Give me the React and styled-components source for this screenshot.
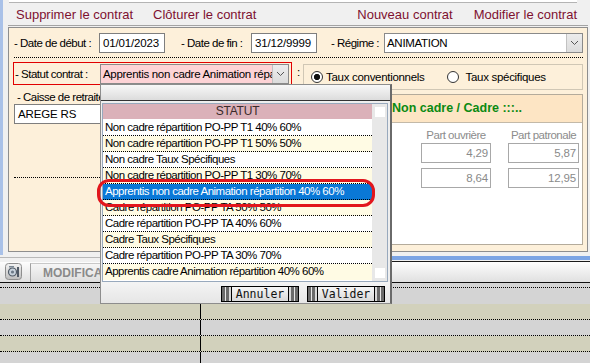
import React from 'react';
import styled, { createGlobalStyle } from 'styled-components';

const SANS = `"Liberation Sans", Arial, sans-serif`;
const MONO = `"DejaVu Sans Mono", "Liberation Mono", monospace`;

const GlobalStyle = createGlobalStyle`
  html, body { margin: 0; padding: 0; }
  body { width: 590px; height: 363px; overflow: hidden; background: #f0f0f0; }
  * { box-sizing: border-box; }
`;

const Root = styled.div`
  position: relative;
  width: 590px;
  height: 363px;
  overflow: hidden;
  background: #f0f0f0;
  display: flex;
  flex-direction: column;
  font-family: ${SANS};
  font-size: 11.5px;
  letter-spacing: -0.5px;
  color: #000;
`;

const Upper = styled.div`
  display: flex;
  height: 255px;
  flex-shrink: 0;
`;

const BlueStrip = styled.div`
  width: 3px;
  background: #a9c1e8;
`;

const UpperMain = styled.div`
  flex: 1;
  display: flex;
  flex-direction: column;
  padding: 0 2px 0 5px;
`;

const TopStrip = styled.div`
  height: 3px;
  background: #fff;
  border-bottom: 1px solid #b4b4b4;
  margin: 0 11px 0 1px;
`;

const Toolbar = styled.div`
  height: 23px;
  border-bottom: 1px solid #a3a3a3;
  display: flex;
  align-items: center;
  justify-content: space-between;
  padding: 0 11px 0 8px;
`;

const ToolGroup = styled.div`
  display: flex;
  gap: ${(p) => p.$gap}px;
`;

const ToolLink = styled.span`
  font-size: 13px;
  letter-spacing: 0;
  color: #7e1030;
  white-space: nowrap;
`;

const Panel = styled.div`
  margin-top: 1px;
  height: 225px;
  border: 1px solid #8e8e8e;
  background: #fdf0da;
  padding: 4px 3px 0 5px;
  display: flex;
  flex-direction: column;
`;

const FieldRow = styled.div`
  display: flex;
  align-items: center;
  height: 21px;
`;

const FieldLabel = styled.span`
  width: ${(p) => p.$w}px;
  margin-left: ${(p) => p.$ml || 0}px;
  white-space: nowrap;
  flex-shrink: 0;
`;

const TextBox = styled.div`
  width: ${(p) => p.$w}px;
  height: 20px;
  flex-shrink: 0;
  background: #fff;
  border: 1px solid #7e7e7e;
  font-size: 11.5px;
  letter-spacing: -0.15px;
  line-height: 18px;
  padding-left: 3px;
  white-space: nowrap;
  overflow: hidden;
`;

const SelectBox = styled.div`
  width: ${(p) => p.$w}px;
  height: 20px;
  flex-shrink: 0;
  display: flex;
  background: ${(p) => p.$bg || '#fff'};
  border: 1px solid #8a8a8a;
  font-size: 11.5px;
  letter-spacing: -0.3px;
  line-height: 18px;
`;

const SelectText = styled.span`
  flex: 1;
  padding-left: 2px;
  white-space: nowrap;
  overflow: hidden;
`;

const ArrowBtn = styled.span`
  width: 16px;
  background: linear-gradient(#ececec, #dcdcdc);
  border-left: 1px solid #c2c2c2;
  display: flex;
  align-items: center;
  justify-content: center;
`;

const DottedRule = styled.div`
  margin: ${(p) => p.$mt || 4}px 1px 0 0;
  width: ${(p) => (p.$w ? `${p.$w}px` : 'auto')};
  border-top: 1px dotted #000;
`;

const StatusRow = styled.div`
  display: flex;
  align-items: flex-start;
  margin-top: 4px;
  height: 28px;
`;

const RedBox = styled.div`
  margin-left: -1px;
  width: 279px;
  height: 23px;
  border: 1px solid #e10000;
  display: flex;
  align-items: center;
  padding-left: 1px;
`;

const ColonCell = styled.span`
  width: 11px;
  padding-left: 5px;
  line-height: 14px;
  margin-top: 3px;
`;

const RadioBox = styled.div`
  margin-top: 2px;
  width: 280px;
  height: 26px;
  border: 1px solid #d0c7b5;
  display: flex;
  align-items: center;
  padding-left: 7px;
`;

const RadioItem = styled.label`
  display: flex;
  align-items: center;
  gap: ${(p) => p.$gap}px;
  margin-left: ${(p) => p.$ml || 0}px;
  font-size: 11.5px;
  letter-spacing: -0.3px;
  white-space: nowrap;
`;

const RadioDot = styled.span`
  width: 12px;
  height: 12px;
  border-radius: 50%;
  border: 1px solid #333;
  background: ${(p) =>
    p.$checked ? 'radial-gradient(circle, #111 0 2.8px, #fff 3.4px)' : '#fff'};
`;

const LowerRow = styled.div`
  display: flex;
  margin-top: 1px;
`;

const LeftCol = styled.div`
  width: 288px;
  display: flex;
  flex-direction: column;
`;

const CaisseLabel = styled.span`
  line-height: 13px;
  padding-left: 3px;
`;

const RightCol = styled.div`
  margin-top: 3px;
  width: 281px;
  height: 151px;
  border: 1px solid #b4ab9b;
  display: flex;
  flex-direction: column;
`;

const RateHeader = styled.div`
  height: 28px;
  background: #fde5c4;
  border-bottom: 1px solid #c3b9a8;
  padding-left: 89px;
  font-weight: bold;
  font-size: 12.5px;
  letter-spacing: 0;
  line-height: 27px;
  color: #0b8a12;
  white-space: nowrap;
`;

const RateBody = styled.div`
  flex: 1;
  background: #fff;
  padding: 5px 3px 0 0;
  display: grid;
  grid-template-columns: 70px 71px;
  grid-auto-rows: min-content;
  column-gap: 17px;
  justify-content: end;
`;

const RateLabel = styled.span`
  height: 15px;
  line-height: 14px;
  text-align: center;
  color: #8c8c8c;
  white-space: nowrap;
`;

const RateValue = styled.div`
  height: 20px;
  margin-bottom: 5px;
  border: 1px solid #a8a8a8;
  text-align: right;
  padding-right: 2px;
  line-height: 18px;
  font-size: 11.5px;
  letter-spacing: -0.15px;
  color: #8a8a8a;
`;

const TabStrip = styled.div`
  height: 7px;
  display: flex;
  flex-shrink: 0;
`;

const TabStripLeft = styled.div`
  width: 200px;
  margin-top: 2px;
  height: 1px;
  background: #b8b8b8;
`;

const TabStripRight = styled.div`
  flex: 1;
  margin-top: 1px;
  border-top: 4px solid #7ba4e4;
  border-bottom: 1px solid #1a1a1a;
`;

const BottomToolbar = styled.div`
  height: 21px;
  flex-shrink: 0;
  background: linear-gradient(#fdfdfd, #e0e0e0);
  border-bottom: 1px solid #111;
  display: flex;
  align-items: flex-start;
  padding: 1px 0 0 5px;
`;

const IconBox = styled.span`
  width: 17px;
  height: 17px;
  display: flex;
`;

const ModeTab = styled.div`
  margin-left: 8px;
  height: 19px;
  width: 200px;
  border-left: 1px solid #a0a0a0;
  border-top: 1px solid #c8c8c8;
  background: linear-gradient(#f6f6f6, #dedede);
  padding-left: 12px;
  font-weight: bold;
  font-size: 12px;
  letter-spacing: 0;
  line-height: 18px;
  color: #8a8a8a;
`;

const Grid = styled.div`
  flex: 1;
  display: flex;
  flex-direction: column;
  background: #d4d4d4;
`;

const GridTop = styled.div`
  height: 5px;
  border-bottom: 1px dotted #000;
`;

const GridRow = styled.div`
  height: 16px;
  flex-shrink: 0;
  display: grid;
  grid-template-columns: 201px 1fr;
  background: ${(p) => (p.$alt ? '#d2d1bc' : '#d4d4d4')};
  border-bottom: ${(p) => (p.$line ? '1px dotted #000' : '1px solid transparent')};
`;

const GridCell = styled.div`
  border-right: ${(p) => (p.$first ? '1px solid #000' : 'none')};
`;

/* Popup list */
const Popup = styled.div`
  position: absolute;
  left: 100px;
  top: 84px;
  width: 292px;
  height: 220px;
  background: #eeeeee;
  border: 1px solid #8d8d8d;
  border-right: 2px solid #6a6a6a;
  display: flex;
  flex-direction: column;
`;

const PopHeader = styled.div`
  height: 16px;
  background: linear-gradient(#f8f8f8, #dcdcdc);
  border-bottom: 1px solid #333;
`;

const ListFrame = styled.div`
  margin: 2px 2px 0 1px;
  height: 179px;
  border: 1px solid #98a9bd;
  display: flex;
  background: #fff;
`;

const ListTable = styled.div`
  flex: 1;
  display: flex;
  flex-direction: column;
`;

const ListHead = styled.div`
  height: 15px;
  margin-bottom: 1px;
  background: #dbb1b9;
  text-align: center;
  line-height: 15px;
  font-size: 12px;
  letter-spacing: -0.2px;
  color: #3a2a2a;
`;

const ListRow = styled.div`
  height: 16px;
  line-height: 15px;
  padding-left: 2px;
  white-space: nowrap;
  overflow: hidden;
  border-bottom: 1px dotted #000;
  background: ${(p) => (p.$sel ? '#0a78d7' : p.$alt ? '#fffbe4' : '#fff')};
  color: ${(p) => (p.$sel ? '#fff' : '#000')};
  &:last-child { border-bottom: none; }
`;

const ScrollTrack = styled.div`
  width: 15px;
  background: #e8e8e8;
  display: flex;
  flex-direction: column;
  justify-content: space-between;
  align-items: center;
  padding: 3px 0 3px;
`;

const ScrollSquare = styled.span`
  width: 10px;
  height: 10px;
  background: #fff;
`;

const PopFooter = styled.div`
  flex: 1;
  display: flex;
  justify-content: flex-end;
  align-items: flex-end;
  gap: 8px;
  padding: 0 5px 1px 0;
  background: linear-gradient(#f4f4f4, #e6e6e6);
`;

const StripeButton = styled.div`
  width: 78px;
  height: 16px;
  border: 1px solid #000;
  display: flex;
`;

const ButtonCap = styled.span`
  width: 10px;
  background: linear-gradient(
    90deg,
    #6a6a6a 0 3px,
    #e6e6e6 3px 4px,
    #6a6a6a 4px 7px,
    #d8d8d8 7px 9px,
    #000 9px 10px
  );
  transform: ${(p) => (p.$right ? 'scaleX(-1)' : 'none')};
`;

const ButtonFace = styled.span`
  flex: 1;
  background: linear-gradient(#f6f6f6, #d9d9d9);
  font-family: ${MONO};
  font-size: 11.5px;
  letter-spacing: 0;
  line-height: 14px;
  text-align: center;
  color: #111;
`;

const Annotation = styled.div`
  position: absolute;
  left: 97px;
  top: 179px;
  width: 278px;
  height: 28px;
  border: 3px solid #e2161d;
  border-radius: 12px;
  pointer-events: none;
`;

const Chevron = () => (
  <svg width="9" height="6" viewBox="0 0 9 6">
    <path d="M1 1 L4.5 4.5 L8 1" fill="none" stroke="#555" strokeWidth="1" />
  </svg>
);

const CameraIcon = () => (
  <svg width="17" height="17" viewBox="0 0 17 17">
    <defs>
      <linearGradient id="camg" x1="0" y1="0" x2="0" y2="1">
        <stop offset="0" stopColor="#f4f4f4" />
        <stop offset="1" stopColor="#bdbdbd" />
      </linearGradient>
    </defs>
    <rect x="0.5" y="0.5" width="16" height="16" rx="3" fill="url(#camg)" stroke="#8e8e8e" />
    <circle cx="7.5" cy="9" r="4" fill="#c9d3dd" stroke="#505a66" strokeWidth="1.2" />
    <circle cx="7.5" cy="9" r="1.6" fill="#6d7a88" />
    <rect x="12" y="4" width="2" height="10" fill="#505a66" />
    <rect x="4" y="3" width="5" height="1.5" fill="#7a8794" />
  </svg>
);

const statuts = [
  'Non cadre répartition PO-PP T1 40% 60%',
  'Non cadre répartition PO-PP T1 50% 50%',
  'Non cadre Taux Spécifiques',
  'Non cadre répartition PO-PP T1 30% 70%',
  'Apprentis non cadre Animation répartition 40% 60%',
  'Cadre répartition PO-PP TA 50% 50%',
  'Cadre répartition PO-PP TA 40% 60%',
  'Cadre Taux Spécifiques',
  'Cadre répartition PO-PP TA 30% 70%',
  'Apprentis cadre Animation répartition 40% 60%',
];

const gridRows = [
  { alt: false, line: false },
  { alt: true, line: true },
  { alt: false, line: true },
  { alt: true, line: true },
  { alt: false, line: false },
];

export default function App() {
  return (
    <Root>
      <GlobalStyle />
      <Upper>
        <BlueStrip />
        <UpperMain>
          <TopStrip />
          <Toolbar>
            <ToolGroup $gap={20}>
              <ToolLink>Supprimer le contrat</ToolLink>
              <ToolLink>Clôturer le contrat</ToolLink>
            </ToolGroup>
            <ToolGroup $gap={21}>
              <ToolLink>Nouveau contrat</ToolLink>
              <ToolLink>Modifier le contrat</ToolLink>
            </ToolGroup>
          </Toolbar>
          <Panel>
            <FieldRow>
              <FieldLabel $w={85}>- Date de début :</FieldLabel>
              <TextBox $w={66}>01/01/2023</TextBox>
              <FieldLabel $w={70} $ml={16}>- Date de fin :</FieldLabel>
              <TextBox $w={66}>31/12/9999</TextBox>
              <FieldLabel $w={53} $ml={14}>- Régime :</FieldLabel>
              <SelectBox $w={199}>
                <SelectText>ANIMATION</SelectText>
                <ArrowBtn><Chevron /></ArrowBtn>
              </SelectBox>
            </FieldRow>
            <DottedRule />
            <StatusRow>
              <RedBox>
                <FieldLabel $w={85}>- Statut contrat :</FieldLabel>
                <SelectBox $w={189} $bg="#fdd3d6">
                  <SelectText>Apprentis non cadre Animation répartition 40% 60%</SelectText>
                  <ArrowBtn><Chevron /></ArrowBtn>
                </SelectBox>
              </RedBox>
              <ColonCell>:</ColonCell>
              <RadioBox>
                <RadioItem $gap={3}>
                  <RadioDot $checked />
                  Taux conventionnels
                </RadioItem>
                <RadioItem $gap={7} $ml={22}>
                  <RadioDot />
                  Taux spécifiques
                </RadioItem>
              </RadioBox>
            </StatusRow>
            <LowerRow>
              <LeftCol>
                <CaisseLabel>- Caisse de retraite</CaisseLabel>
                <TextBox $w={276}>AREGE RS</TextBox>
                <DottedRule $mt={53} $w={280} />
              </LeftCol>
              <RightCol>
                <RateHeader>Non cadre / Cadre :::..</RateHeader>
                <RateBody>
                  <RateLabel>Part ouvrière</RateLabel>
                  <RateLabel>Part patronale</RateLabel>
                  <RateValue>4,29</RateValue>
                  <RateValue>5,87</RateValue>
                  <RateValue>8,64</RateValue>
                  <RateValue>12,95</RateValue>
                </RateBody>
              </RightCol>
            </LowerRow>
          </Panel>
        </UpperMain>
      </Upper>
      <TabStrip>
        <TabStripLeft />
        <TabStripRight />
      </TabStrip>
      <BottomToolbar>
        <IconBox><CameraIcon /></IconBox>
        <ModeTab>MODIFICATION</ModeTab>
      </BottomToolbar>
      <Grid>
        <GridTop />
        {gridRows.map((r, i) => (
          <GridRow key={i} $alt={r.alt} $line={r.line}>
            <GridCell $first />
            <GridCell />
          </GridRow>
        ))}
      </Grid>

      <Popup>
        <PopHeader />
        <ListFrame>
          <ListTable>
            <ListHead>STATUT</ListHead>
            {statuts.map((s, i) => (
              <ListRow key={s} $alt={i % 2 === 1} $sel={i === 4}>
                {s}
              </ListRow>
            ))}
          </ListTable>
          <ScrollTrack>
            <ScrollSquare />
            <ScrollSquare />
          </ScrollTrack>
        </ListFrame>
        <PopFooter>
          <StripeButton>
            <ButtonCap />
            <ButtonFace>Annuler</ButtonFace>
            <ButtonCap $right />
          </StripeButton>
          <StripeButton>
            <ButtonCap />
            <ButtonFace>Valider</ButtonFace>
            <ButtonCap $right />
          </StripeButton>
        </PopFooter>
      </Popup>
      <Annotation />
    </Root>
  );
}
